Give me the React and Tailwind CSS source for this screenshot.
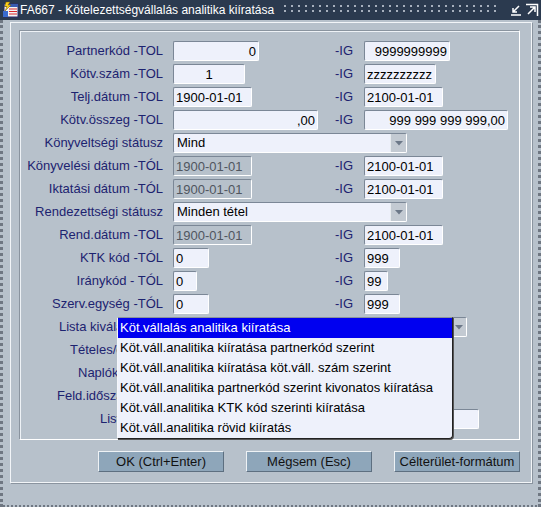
import React from "react";
import clsx from "clsx";

const Label = ({ children, clip }) => (
  <div className={clsx("flex items-center justify-end pr-[10px] text-[13px] text-[#1d2370] whitespace-nowrap", clip && "overflow-hidden")}>
    {clip ? (
      <div className="w-[97px] overflow-hidden self-stretch flex items-center mr-[46px] -ml-[56px] justify-end">
        <span className="translate-x-[46px]">{children}</span>
      </div>
    ) : (
      children
    )}
  </div>
);

const IgLabel = () => (
  <div className="flex items-center justify-end pr-[11px] text-[13px] text-[#1d2370]">-IG</div>
);

const Input = ({ w, value, justify = "justify-start", disabled }) => (
  <div
    className={clsx(
      "h-[20px] flex items-center px-[2px] text-[13px] leading-none border border-t-[#7b8796] border-l-[#7b8796] border-r-white border-b-white rounded-[2px] whitespace-nowrap overflow-hidden",
      w,
      justify,
      disabled ? "bg-[#b7c1cb] text-[#50565f]" : "bg-[#eef1fb] text-black"
    )}
  >
    {value}
  </div>
);

const Select = ({ w, value }) => (
  <div
    className={clsx(
      "h-[20px] flex items-center bg-[#eef1fb] border border-t-[#7b8796] border-l-[#7b8796] border-r-white border-b-white rounded-[2px] text-[13px] text-black",
      w
    )}
  >
    <span className="flex-1 px-[3px] whitespace-nowrap overflow-hidden">{value}</span>
    <span className="w-[16px] h-full bg-[#c3cad2] border-l border-[#e8ecf0] flex items-center justify-center">
      <svg width="8" height="5" viewBox="0 0 8 5">
        <path d="M0 0 H8 L4 4.5 Z" fill="#6c7888" />
      </svg>
    </span>
  </div>
);

const Button = ({ children }) => (
  <button className="w-[126px] h-[21px] bg-[#8ea6ba] border border-t-[#eef2f5] border-l-[#eef2f5] border-r-[#5d6f80] border-b-[#5d6f80] text-[13px] text-[#111] flex items-center justify-center">
    {children}
  </button>
);

const items = [
  "Köt.vállalás analitika kiíratása",
  "Köt.váll.analitika kiíratása partnerkód szerint",
  "Köt.váll.analitika kiíratása köt.váll. szám szerint",
  "Köt.váll.analitika partnerkód szerint kivonatos kiíratása",
  "Köt.váll.analitika KTK kód szerinti kiíratása",
  "Köt.váll.analitika rövid kiíratás",
];

export default function App() {
  return (
    <div className="w-[541px] h-[507px] bg-[#b7c1cb] font-['Liberation_Sans',Arial,sans-serif] flex flex-col overflow-hidden">
      {/* title bar */}
      <div className="h-[20px] bg-[#2b3a4f] flex items-center text-white text-[12px] shrink-0">
        <svg width="18" height="18" viewBox="0 0 18 18" className="ml-[1px]">
          <rect x="3" y="3" width="14" height="13" fill="#f4f4f4" stroke="#2a2a6a" />
          <rect x="3" y="3" width="14" height="3" fill="#3a5bb0" />
          <path d="M8 8 H16 M8 10.5 H16 M8 13 H16" stroke="#d8262a" strokeWidth="1.2" />
          <path d="M5 1 L9 1 L7 4 L10 4 L4 10 L6 5.5 L3.5 5.5 Z" fill="#ffd21a" stroke="#7a5a00" strokeWidth="0.5" />
          <path d="M2 10 L7 10 L7 16 L2 16 Z" fill="#3a6bd0" />
        </svg>
        <span className="ml-[1px] whitespace-nowrap">FA667 - Kötelezettségvállalás analitika kiíratása</span>
        <div className="ml-[10px] flex-1 h-[10px] bg-[radial-gradient(circle_at_1px_1px,#a7b0bd_1px,transparent_1.3px)] bg-[length:7px_5px]" />
        <svg width="14" height="13" viewBox="0 0 14 13" className="ml-[8px]">
          <path d="M10 2 L4 8 M4 4 V8 H8 M2 11 H12" stroke="white" strokeWidth="1.5" fill="none" />
        </svg>
        <svg width="14" height="14" viewBox="0 0 14 14" className="ml-[2px] mr-[2px]">
          <path d="M3 11 L10 4 M5 4 H10 V9 M1 1.5 H12.5 V13" stroke="white" strokeWidth="1.5" fill="none" />
        </svg>
      </div>

      {/* body */}
      <div className="flex-1 border-l-[3px] border-r-[3px] border-b-[2px] border-dotted border-[#6f7782] pt-[2px] pl-[7px] pr-[6px]">
        <div className="border border-[#f2f5f8] shadow-[1px_1px_0_#8a949f] h-[461px] pt-[7px] pl-[8px] pr-[11px]">
          <div className="border border-t-[#8a949f] border-l-[#8a949f] border-r-white border-b-white shadow-[inset_1px_1px_0_#eef2f6] pt-[10px] pb-[10px]">
            <div className="relative grid grid-cols-[153px_157px_34px_1fr] auto-rows-[20px] gap-y-[3px]">
              <Label>Partnerkód -TOL</Label>
              <Input w="w-[86px]" value="0" justify="justify-end" />
              <IgLabel />
              <Input w="w-[86px]" value="9999999999" justify="justify-end" />

              <Label>Kötv.szám -TOL</Label>
              <Input w="w-[72px]" value="1" justify="justify-center" />
              <IgLabel />
              <Input w="w-[72px]" value="zzzzzzzzzz" />

              <Label>Telj.dátum -TOL</Label>
              <Input w="w-[79px]" value="1900-01-01" />
              <IgLabel />
              <Input w="w-[79px]" value="2100-01-01" />

              <Label>Kötv.összeg -TOL</Label>
              <Input w="w-[145px]" value=",00" justify="justify-end" />
              <IgLabel />
              <Input w="w-[144px]" value="999 999 999 999,00" justify="justify-end" />

              <Label>Könyveltségi státusz</Label>
              <div className="col-span-3">
                <Select w="w-[234px]" value="Mind" />
              </div>

              <Label>Könyvelési dátum -TÓL</Label>
              <Input w="w-[79px]" value="1900-01-01" disabled />
              <IgLabel />
              <Input w="w-[79px]" value="2100-01-01" />

              <Label>Iktatási dátum -TÓL</Label>
              <Input w="w-[79px]" value="1900-01-01" disabled />
              <IgLabel />
              <Input w="w-[79px]" value="2100-01-01" />

              <Label>Rendezettségi státusz</Label>
              <div className="col-span-3">
                <Select w="w-[234px]" value="Minden tétel" />
              </div>

              <Label>Rend.dátum -TOL</Label>
              <Input w="w-[79px]" value="1900-01-01" disabled />
              <IgLabel />
              <Input w="w-[79px]" value="2100-01-01" />

              <Label>KTK kód -TÓL</Label>
              <Input w="w-[36px]" value="0" />
              <IgLabel />
              <Input w="w-[36px]" value="999" />

              <Label>Iránykód - TÓL</Label>
              <Input w="w-[24px]" value="0" />
              <IgLabel />
              <Input w="w-[24px]" value="99" />

              <Label>Szerv.egység -TÓL</Label>
              <Input w="w-[36px]" value="0" />
              <IgLabel />
              <Input w="w-[36px]" value="999" />

              {/* rows partly covered by the open list */}
              <div className="flex items-center pl-[39px] text-[13px] text-[#1d2370] whitespace-nowrap overflow-hidden w-[97px]">Lista kiválasztás</div>
              <div className="col-span-3 -ml-[56px] pl-[56px]">
                <Select w="w-[294px]" value="" />
              </div>

              <div className="flex items-center pl-[50px] text-[13px] text-[#1d2370] whitespace-nowrap overflow-hidden w-[97px]">Tételes/összesít</div>
              <div className="col-span-3" />

              <div className="flex items-center pl-[58px] text-[13px] text-[#1d2370] whitespace-nowrap overflow-hidden w-[97px]">Naplók típusa</div>
              <div className="col-span-3" />

              <div className="flex items-center pl-[37px] text-[13px] text-[#1d2370] whitespace-nowrap overflow-hidden w-[97px]">Feld.időszak kód</div>
              <div className="col-span-3" />

              <div className="flex items-center pl-[80px] text-[13px] text-[#1d2370] whitespace-nowrap overflow-hidden w-[97px]">Lista neve</div>
              <div className="col-span-3">
                <Input w="w-[306px]" value="" />
              </div>

              {/* open list of the "Lista" select */}
              <div className="absolute left-[97px] top-[276px] w-[336px] bg-[#eef1fb] border border-t-[#8a949f] border-l-[#f4f6fa] border-r-[#222] border-b-[#222] rounded-br-[4px] shadow-[1px_1px_0_#555] text-[13px] text-black">
                {items.map((t, i) => (
                  <div
                    key={t}
                    className={clsx(
                      "h-[20px] flex items-center pl-[2px] whitespace-nowrap",
                      i === 0 && "bg-[#0000f0] text-white"
                    )}
                  >
                    {t}
                  </div>
                ))}
              </div>
            </div>
          </div>

          <div className="flex justify-end gap-[22px] mt-[11px]">
            <Button>OK (Ctrl+Enter)</Button>
            <Button>Mégsem (Esc)</Button>
            <Button>Célterület-formátum</Button>
          </div>
        </div>
      </div>
    </div>
  );
}
